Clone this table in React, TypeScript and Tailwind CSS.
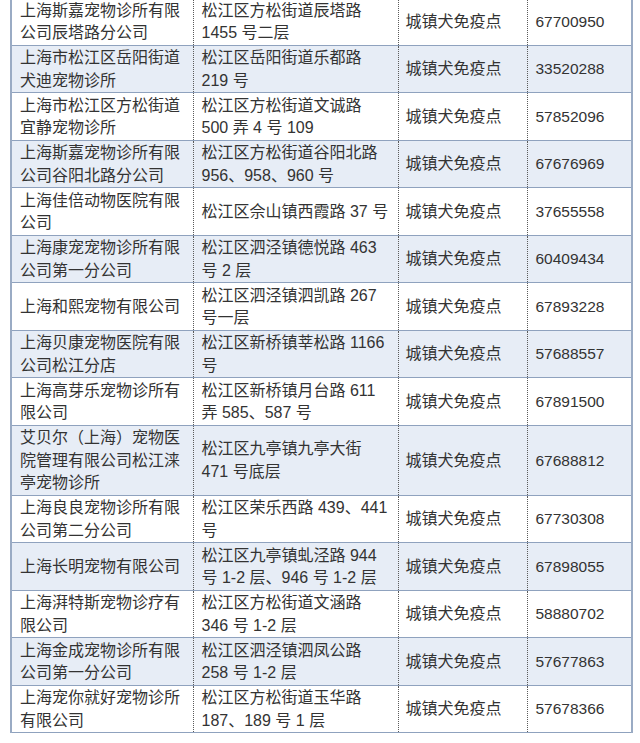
type Clinic = {
  name: string[];
  address: string[];
  phone: string;
};

const clinics: Clinic[] = [
  { name: ["上海斯嘉宠物诊所有限", "公司辰塔路分公司"], address: ["松江区方松街道辰塔路", "1455 号二层"], phone: "67700950" },
  { name: ["上海市松江区岳阳街道", "犬迪宠物诊所"], address: ["松江区岳阳街道乐都路", "219 号"], phone: "33520288" },
  { name: ["上海市松江区方松街道", "宜静宠物诊所"], address: ["松江区方松街道文诚路", "500 弄 4 号 109"], phone: "57852096" },
  { name: ["上海斯嘉宠物诊所有限", "公司谷阳北路分公司"], address: ["松江区方松街道谷阳北路", "956、958、960 号"], phone: "67676969" },
  { name: ["上海佳倍动物医院有限", "公司"], address: ["松江区佘山镇西霞路 37 号"], phone: "37655558" },
  { name: ["上海康宠宠物诊所有限", "公司第一分公司"], address: ["松江区泗泾镇德悦路 463", "号 2 层"], phone: "60409434" },
  { name: ["上海和熙宠物有限公司"], address: ["松江区泗泾镇泗凯路 267", "号一层"], phone: "67893228" },
  { name: ["上海贝康宠物医院有限", "公司松江分店"], address: ["松江区新桥镇莘松路 1166", "号"], phone: "57688557" },
  { name: ["上海高芽乐宠物诊所有", "限公司"], address: ["松江区新桥镇月台路 611", "弄 585、587 号"], phone: "67891500" },
  { name: ["艾贝尔（上海）宠物医", "院管理有限公司松江涞", "亭宠物诊所"], address: ["松江区九亭镇九亭大街", "471 号底层"], phone: "67688812" },
  { name: ["上海良良宠物诊所有限", "公司第二分公司"], address: ["松江区荣乐西路 439、441", "号"], phone: "67730308" },
  { name: ["上海长明宠物有限公司"], address: ["松江区九亭镇虬泾路 944", "号 1-2 层、946 号 1-2 层"], phone: "67898055" },
  { name: ["上海湃特斯宠物诊疗有", "限公司"], address: ["松江区方松街道文涵路", "346 号 1-2 层"], phone: "58880702" },
  { name: ["上海金成宠物诊所有限", "公司第一分公司"], address: ["松江区泗泾镇泗凤公路", "258 号 1-2 层"], phone: "57677863" },
  { name: ["上海宠你就好宠物诊所", "有限公司"], address: ["松江区方松街道玉华路", "187、189 号 1 层"], phone: "57678366" },
];

function Lines({ lines }: { lines: string[] }) {
  return (
    <>
      {lines.map((line, i) => (
        <div key={i}>{line}</div>
      ))}
    </>
  );
}

export default function App() {
  return (
    <div className="min-h-[743px] bg-white overflow-hidden">
      <table
        className="ml-[10px] -mt-[3px] w-[621px] table-fixed border-collapse border-x-2 border-[#9aabc4] text-[16px] leading-[22.5px] text-[#333333]"
        style={{ fontFamily: '"Liberation Sans", "Noto Sans CJK SC", sans-serif' }}
      >
        <colgroup>
          <col className="w-[182px]" />
          <col className="w-[205px]" />
          <col className="w-[129px]" />
          <col className="w-[105px]" />
        </colgroup>
        <tbody>
          {clinics.map((c, i) => (
            <tr
              key={c.phone}
              className={`border-y border-[#8fa2be] ${i % 2 === 1 ? "bg-[#e7edf6]" : "bg-white"}`}
            >
              <td className="pl-[8px] pr-1 pt-[1.5px] pb-0 align-middle whitespace-nowrap">
                <Lines lines={c.name} />
              </td>
              <td className="border-l border-dotted border-l-[#5a5a5a] pl-[8px] pr-1 pt-[1.5px] pb-0 align-middle whitespace-nowrap">
                <Lines lines={c.address} />
              </td>
              <td className="border-l border-dotted border-l-[#5a5a5a] pl-[7px] pt-[1.5px] pb-0 align-middle whitespace-nowrap">
                城镇犬免疫点
              </td>
              <td className="border-l border-dotted border-l-[#5a5a5a] pl-[8px] pt-[1.5px] pb-0 align-middle whitespace-nowrap text-[15.5px]">
                {c.phone}
              </td>
            </tr>
          ))}
        </tbody>
      </table>
    </div>
  );
}
